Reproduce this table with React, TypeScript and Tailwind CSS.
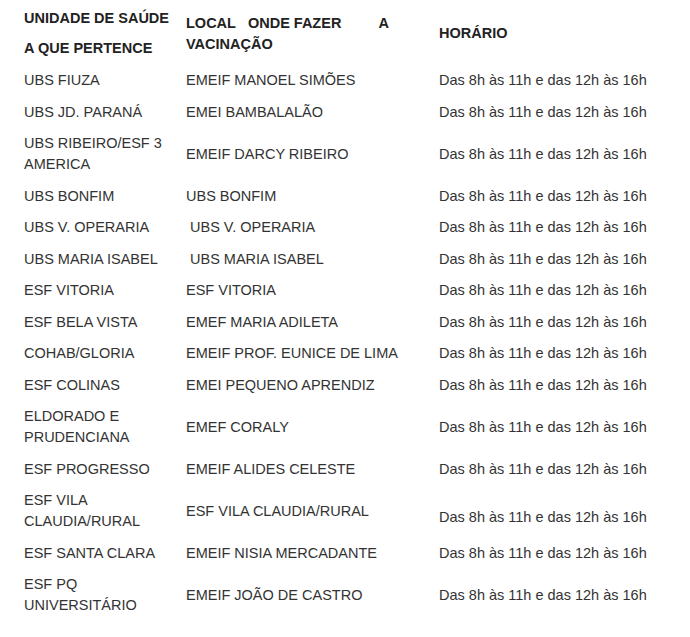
const rows: { a: string[]; b: string; cOffset?: string }[] = [
  { a: ['UBS FIUZA'], b: 'EMEIF MANOEL SIMÕES' },
  { a: ['UBS JD. PARANÁ'], b: 'EMEI BAMBALALÃO' },
  { a: ['UBS RIBEIRO/ESF 3', 'AMERICA'], b: 'EMEIF DARCY RIBEIRO' },
  { a: ['UBS BONFIM'], b: 'UBS BONFIM' },
  { a: ['UBS V. OPERARIA'], b: '\u00a0UBS V. OPERARIA' },
  { a: ['UBS MARIA ISABEL'], b: '\u00a0UBS MARIA ISABEL' },
  { a: ['ESF VITORIA'], b: 'ESF VITORIA' },
  { a: ['ESF BELA VISTA'], b: 'EMEF MARIA ADILETA' },
  { a: ['COHAB/GLORIA'], b: 'EMEIF PROF. EUNICE DE LIMA' },
  { a: ['ESF COLINAS'], b: 'EMEI PEQUENO APRENDIZ' },
  { a: ['ELDORADO E', 'PRUDENCIANA'], b: 'EMEF CORALY' },
  { a: ['ESF PROGRESSO'], b: 'EMEIF ALIDES CELESTE' },
  { a: ['ESF VILA', 'CLAUDIA/RURAL'], b: 'ESF VILA CLAUDIA/RURAL', cOffset: 'pt-[12px]' },
  { a: ['ESF SANTA CLARA'], b: 'EMEIF NISIA MERCADANTE' },
  { a: ['ESF PQ', 'UNIVERSITÁRIO'], b: 'EMEIF JOÃO DE CASTRO' },
];

export default function App() {
  return (
    <div className="min-h-[637px] w-[690px] bg-white pt-[2px] text-[#333] text-[14.5px] leading-[21px]" style={{ fontFamily: '"Liberation Sans", Arial, sans-serif' }}>
      <table className="ml-[24px] border-collapse">
        <thead>
          <tr className="h-[63px] font-bold text-[#222]">
            <td className="w-[162px] align-middle p-0">
              <div>UNIDADE DE SAÚDE</div>
              <div className="mt-[9px]">A QUE PERTENCE</div>
            </td>
            <td className="w-[253px] align-middle p-0">
              <div className="whitespace-nowrap">
                <span>LOCAL</span>
                <span className="ml-[12px]">ONDE</span>
                <span className="ml-[4px]">FAZER</span>
                <span className="ml-[37px]">A</span>
              </div>
              <div>VACINAÇÃO</div>
            </td>
            <td className="align-middle p-0">HORÁRIO</td>
          </tr>
        </thead>
        <tbody>
          {rows.map((r, i) => (
            <tr key={i} className={r.a.length > 1 ? 'h-[52.5px]' : 'h-[31.5px]'}>
              <td className="align-middle p-0">
                {r.a.map((l) => (
                  <div key={l}>{l}</div>
                ))}
              </td>
              <td className="align-middle p-0 whitespace-nowrap">{r.b}</td>
              <td className={`align-middle p-0 whitespace-nowrap ${r.cOffset ?? ''}`}>Das 8h às 11h e das 12h às 16h</td>
            </tr>
          ))}
        </tbody>
      </table>
    </div>
  );
}
